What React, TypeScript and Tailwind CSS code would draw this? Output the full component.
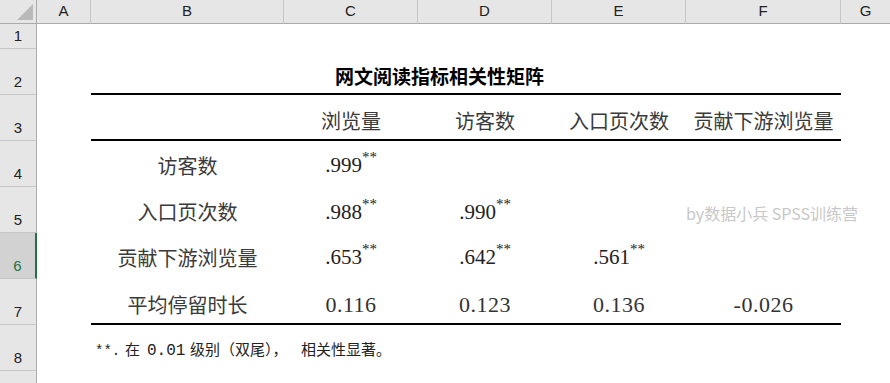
import React from "react";

const cjk = "font-['Noto_Sans_CJK_SC',sans-serif]";
const serif = "font-['Liberation_Serif',serif]";

// widths incl. right border: A, B, C, D, E, F
const colW = ["w-[54px]", "w-[193px]", "w-[134px]", "w-[134px]", "w-[134px]", "w-[155px]"];
const letters = ["A", "B", "C", "D", "E", "F"];

function RowHead({ n, h, active }: { n?: number; h: string; active?: boolean }) {
  return (
    <div
      className={`${h} w-[37px] shrink-0 flex items-end justify-center pb-[2px] border-b border-[#c6c6c6] font-['Liberation_Sans',sans-serif] text-[15px] leading-[20px] ${
        active
          ? "bg-[#d2d2d2] text-[#217346] border-r-2 border-r-[#217346]"
          : "bg-[#e6e6e6] text-[#222] border-r border-r-[#ababab]"
      }`}
    >
      {n}
    </div>
  );
}

function Num({ v, star }: { v: string; star?: boolean }) {
  return (
    <span className={`${serif} text-[21px] leading-[21px] text-[#222] inline-flex items-start`}>
      {v}
      {star && <span className="text-[15px] leading-[12px] -mt-[4px]">**</span>}
    </span>
  );
}

export default function App() {
  const line = "border-b-2 border-black";

  const body = [
    { n: 4, label: "访客数", pt: "pt-[3px]", vals: [".999", "", "", ""] },
    { n: 5, label: "入口页次数", pt: "pt-[4px]", vals: [".988", ".990", "", ""] },
    { n: 6, label: "贡献下游浏览量", pt: "pt-[3px]", vals: [".653", ".642", ".561", ""] },
  ];

  return (
    <div className="relative w-[890px] h-[383px] overflow-hidden bg-white">
      {/* column header */}
      <div className="flex h-[24px]">
        <div className="w-[37px] shrink-0 bg-[#e6e6e6] border-r border-b border-[#ababab] relative">
          <svg className="absolute left-[17px] top-[4px]" width="16" height="16" viewBox="0 0 16 16">
            <polygon points="16,0 16,16 0,16" fill="#b9b9b9" />
          </svg>
        </div>
        {letters.map((l, i) => (
          <div
            key={l}
            className={`${colW[i]} shrink-0 bg-[#e6e6e6] border-r border-r-[#c6c6c6] border-b border-b-[#ababab] flex items-center justify-center font-['Liberation_Sans',sans-serif] text-[15px] text-[#222]`}
          >
            {l}
          </div>
        ))}
        <div className="flex-1 bg-[#e6e6e6] border-b border-[#ababab] flex items-center justify-center font-['Liberation_Sans',sans-serif] text-[15px] text-[#222]">
          G
        </div>
      </div>

      {/* row 1 */}
      <div className="flex">
        <RowHead n={1} h="h-[25px]" />
      </div>

      {/* row 2: title */}
      <div className="flex h-[46px]">
        <RowHead n={2} h="h-[46px]" />
        <div className="w-[54px] shrink-0" />
        <div className={`w-[750px] shrink-0 ${line} flex items-end pl-[244px] pb-[8px]`}>
          <span className={`${cjk} font-bold text-[19px] leading-[19px] text-black`}>网文阅读指标相关性矩阵</span>
        </div>
      </div>

      {/* row 3: header */}
      <div className="flex h-[46px]">
        <RowHead n={3} h="h-[46px]" />
        <div className="w-[54px] shrink-0" />
        <div className={`w-[193px] shrink-0 ${line}`} />
        {["浏览量", "访客数", "入口页次数", "贡献下游浏览量"].map((t, i) => (
          <div
            key={t}
            className={`${colW[i + 2]} shrink-0 ${line} flex items-center justify-center pt-[7px] ${cjk} text-[20px] leading-[20px] text-[#3a3a3a]`}
          >
            {t}
          </div>
        ))}
      </div>

      {/* rows 4-6 */}
      {body.map((r) => (
        <div key={r.n} className="flex h-[46px]">
          <RowHead n={r.n} h="h-[46px]" active={r.n === 6} />
          <div className="w-[54px] shrink-0" />
          <div className={`w-[193px] shrink-0 flex items-center justify-center ${r.pt} ${cjk} text-[20px] leading-[20px] text-[#3a3a3a]`}>
            {r.label}
          </div>
          {r.vals.map((v, i) => (
            <div key={i} className={`${colW[i + 2]} shrink-0 flex items-center justify-center ${r.pt}`}>
              {v && <Num v={v} star />}
            </div>
          ))}
        </div>
      ))}

      {/* row 7 */}
      <div className="flex h-[46px]">
        <RowHead n={7} h="h-[46px]" />
        <div className="w-[54px] shrink-0" />
        <div className={`w-[193px] shrink-0 ${line} flex items-center justify-center pt-[7px] ${cjk} text-[20px] leading-[20px] text-[#3a3a3a]`}>
          平均停留时长
        </div>
        {["0.116", "0.123", "0.136", "-0.026"].map((v, i) => (
          <div
            key={v}
            className={`${colW[i + 2]} shrink-0 ${line} flex items-center justify-center pt-[7px] ${serif} text-[22px] leading-[22px] tracking-[0.5px] text-[#333]`}
          >
            {v}
          </div>
        ))}
      </div>

      {/* row 8: footnote */}
      <div className="flex h-[46px]">
        <RowHead n={8} h="h-[46px]" />
        <div className="w-[54px] shrink-0" />
        <div className="w-[750px] shrink-0 flex items-center pl-[4px] pt-[3px]">
          <div className={`flex items-baseline ${cjk} text-[15px] leading-[15px] text-[#222] whitespace-nowrap`}>
            <span className="w-[30px] shrink-0 font-['Liberation_Mono',monospace] text-[14px]">**.</span>
            <span className="w-[22px] shrink-0">在</span>
            <span className="w-[43px] shrink-0 font-['Liberation_Mono',monospace] text-[16px]">0.01</span>
            <span className="w-[111px] shrink-0">级别（双尾），</span>
            <span>相关性显著。</span>
          </div>
        </div>
      </div>

      {/* row 9 */}
      <div className="flex">
        <RowHead h="h-[46px]" />
      </div>

      {/* watermark */}
      <div className={`absolute left-[686px] top-[205px] ${cjk} text-[16px] leading-[16px] text-[#c8c8c8] whitespace-nowrap`}>
        by数据小兵 SPSS训练营
      </div>
    </div>
  );
}
